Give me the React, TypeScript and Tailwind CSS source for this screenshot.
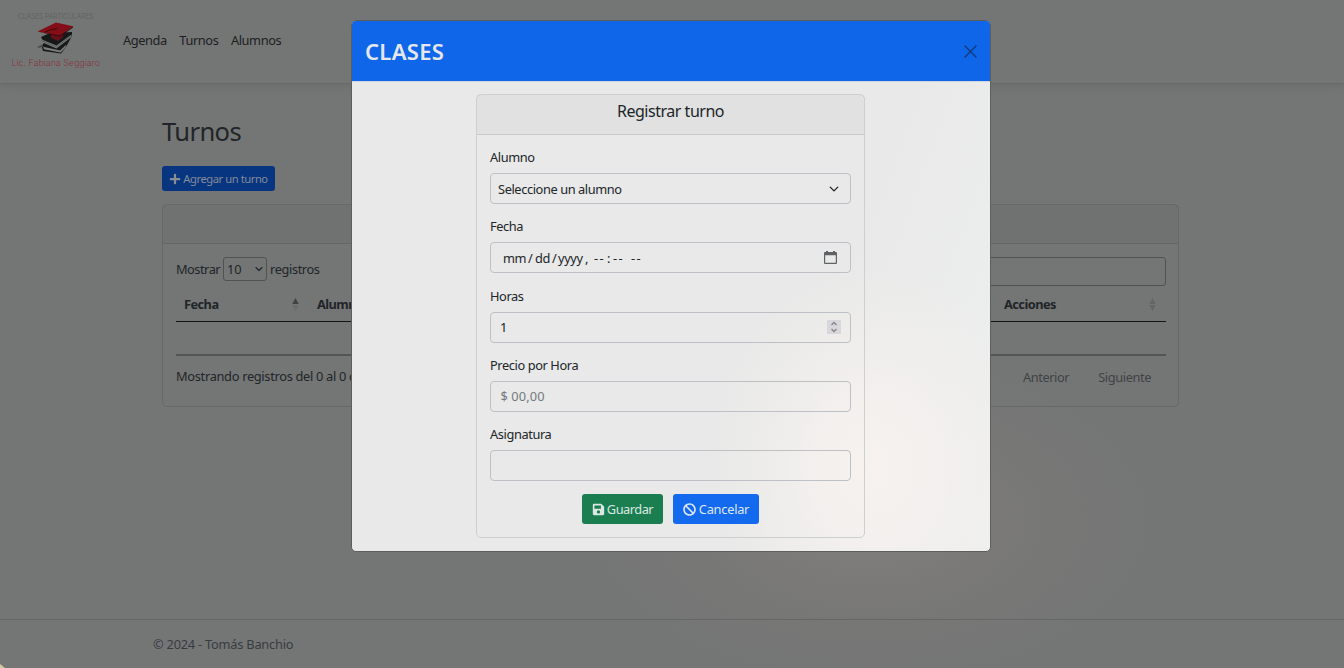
import React from "react";
import { FaPlus, FaSave, FaBan } from "react-icons/fa";

function Logo() {
  return (
    <svg className="block overflow-visible tracking-normal" width="110" height="64" viewBox="0 0 110 64">
      <text x="12" y="9" fontSize="7" fill="#5c5f5f" textLength="75.5" className="font-['Inter',sans-serif] font-light">CLASES PARTICULARES</text>
      <path d="M35 27 L44 23 L66 22 L66 26 L60 37 L55 43.5 L37 41 L35.5 36 L38 33 Z" fill="#171919" />
      <path d="M34.5 29 L50.5 35.5 L65.5 24.5 L65.5 27 L50.5 38.5 L35 31.8 Z" fill="#7a7d7d" />
      <path d="M35.5 30.6 L50.5 37 L64.5 26.5" stroke="#3a3c3c" strokeWidth="0.5" fill="none" />
      <path d="M37 36.8 L54 40.6 L60.5 34.5 L59.5 37.5 L54.5 42.6 L38 39.2 Z" fill="#7c7f7f" />
      <path d="M31 37 L36 34.5 L37.5 36.5 L33 38 L38 40.5 Z" fill="#4b4e4e" />
      <path d="M45 23 L45 27.5 L52 31 L57 27 L57 22 Z" fill="#68101a" />
      <path d="M31.5 21.5 L50 12.5 L67 16.3 L54 25.5 Z" fill="#830e17" />
      <path d="M31.5 21.5 L54 25.5 L67 16.3 L67 17.4 L54 26.7 Z" fill="#3d080d" />
      <path d="M51 18.5 L43 20.3 L38.5 22.5" stroke="#2b0709" strokeWidth="0.8" fill="none" />
      <text x="5.5" y="56" fontSize="9" fill="#843a42" textLength="88.5" className="font-['Inter',sans-serif] font-light">Lic. Fabiana Seggiaro</text>
    </svg>
  );
}

function SortArrows({ active = false }: { active?: boolean }) {
  return (
    <svg className="block" width="7" height="13" viewBox="0 0 7 13">
      <path d="M3.5 0 L6.7 6 H0.3 Z" fill={active ? "#3f4242" : "#656767"} />
      <path d="M3.5 13 L6.7 7 H0.3 Z" fill={active ? "#6a6c6c" : "#656767"} />
    </svg>
  );
}

function Chevron({ className }: { className: string }) {
  return (
    <svg className={className} viewBox="0 0 16 16" fill="none" stroke="currentColor" strokeWidth="2.2" strokeLinecap="round" strokeLinejoin="round">
      <path d="m2 5 6 6 6-6" />
    </svg>
  );
}

function Field({ label, className = "px-[10px]", children }: { label: string; className?: string; children?: React.ReactNode }) {
  return (
    <div className="h-[69.25px]">
      <div className="mb-[6px] h-[19px] leading-[19px]">{label}</div>
      <div className={"flex h-[31px] items-center rounded-[4px] border border-[#bdc1c6] " + className}>{children}</div>
    </div>
  );
}

function Page() {
  return (
    <div className="flex h-full flex-col">
      <header className="flex h-[84px] shrink-0 items-start border-b border-[#686a6a] pl-[6px] pt-[10px] text-[#1c2023] shadow-[0_3px_8px_rgba(0,0,0,0.07)]">
        <Logo />
        <nav className="ml-[7px] mt-[21px] flex gap-[12.5px] leading-[19px]">
          <a>Agenda</a>
          <a>Turnos</a>
          <a>Alumnos</a>
        </nav>
      </header>
      <main className="ml-[162px] w-[1017px] flex-1">
        <h1 className="mt-[32px] text-[25.6px] leading-[31px] tracking-[-0.65px]">Turnos</h1>
        <button className="mt-[19px] flex h-[25px] w-[113px] items-center justify-center rounded-[3px] bg-[#07357f] text-[11.2px] text-[#838b9b]">
          <FaPlus className="mr-[2px] size-[12px] text-[#8a8d93]" />
          <span className="tracking-[-0.44px]">Agregar un turno</span>
        </button>
        <section className="mt-[13px] h-[203px] rounded-[5px] border border-[#666969]">
          <div className="h-[39px] border-b border-[#646767] bg-black/[0.03]" />
          <div className="pl-[13px] pr-[12px] pt-[13px]">
            <div className="flex h-[29px] items-start justify-between">
              <div className="flex items-center">
                <span className="tracking-[-0.5px]">Mostrar</span>
                <div className="mx-[3px] flex h-[24px] w-[44px] items-center justify-between rounded-[3px] border border-[#505353] pl-[3px] pr-[3px] tracking-[-0.1px]">
                  <span>10</span>
                  <Chevron className="size-[8px]" />
                </div>
                <span>registros</span>
              </div>
              <div className="h-[29px] w-[240px] rounded-[3px] border border-[#505353]" />
            </div>
            <div className="flex h-[36px] items-center border-b border-[#121415] pt-[1px] font-bold tracking-[-0.55px]">
              <div className="flex w-[133px] items-center justify-between pl-[8px] pr-[10px]">
                <span>Fecha</span>
                <SortArrows active />
              </div>
              <div className="flex-1 pl-[8px]">Alumno</div>
              <div className="flex w-[170px] items-center justify-between pl-[8px] pr-[10px]">
                <span>Acciones</span>
                <SortArrows />
              </div>
            </div>
            <div className="h-[34px] border-b-2 border-[#525555]" />
            <div className="flex items-center justify-between pt-[10px]">
              <span className="tracking-[-0.3px]">Mostrando registros del 0 al 0 de un total de 0 registros</span>
              <div className="flex gap-[29px] pr-[15px] pt-[2px] text-[#3f4345]">
                <span>Anterior</span>
                <span>Siguiente</span>
              </div>
            </div>
          </div>
        </section>
      </main>
      <footer className="h-[49px] shrink-0 border-t border-[#656767] pl-[153px] pt-[15px] tracking-[-0.22px] text-[#373c40]">© 2024 - Tomás Banchio</footer>
    </div>
  );
}

function Modal() {
  return (
    <div className="absolute left-[351px] top-[20px] h-[532px] w-[640px] overflow-hidden rounded-[5px] border border-[#5d5f5f] bg-[#e8e9e8] bg-[radial-gradient(ellipse_160px_200px_at_520px_445px,rgba(247,242,238,1)_0%,rgba(245,241,239,0.75)_40%,rgba(237,235,235,0)_100%),linear-gradient(110deg,transparent_70%,#eeefef_100%)]">
      <div className="flex h-[61px] items-center justify-between border-b border-[#cfd5dd] bg-[#0f66e9] pl-[13px] pr-[13px]">
        <h2 className="pt-[1px] text-[22px] font-semibold tracking-[0.3px] text-[#e4e7ec]">CLASES</h2>
        <svg className="block text-[#10397c]" width="13" height="13" viewBox="0 0 13 13" fill="none" stroke="currentColor" strokeWidth="1.4" strokeLinecap="round">
          <path d="M1 1 12 12M12 1 1 12" />
        </svg>
      </div>
      <div className="ml-[124px] mt-[12px] h-[444px] w-[389px] rounded-[5px] border border-[#ccd0d0]">
        <div className="h-[40px] border-b border-[#c8caca] bg-black/[0.03] pt-[4px] text-center text-[16px] leading-[24px] tracking-[-0.48px]">Registrar turno</div>
        <div className="px-[13px] pt-[13px]">
          <Field label="Alumno" className="justify-between pl-[7px] pr-[11px]">
            <span className="pt-[2px]">Seleccione un alumno</span>
            <Chevron className="size-[10px]" />
          </Field>
          <Field label="Fecha" className="pl-[12px] pr-[13px]">
            <div className="flex flex-1 whitespace-pre pt-[2px]">
              <span className="w-[25px]">mm</span>
              <span className="w-[7px]">/</span>
              <span className="w-[17px]">dd</span>
              <span className="w-[6px]">/</span>
              <span className="w-[27px]">yyyy</span>
              <span className="w-[9px]">,</span>
              <span className="w-[13px] tracking-[1.3px]">--</span>
              <span className="w-[6px]">:</span>
              <span className="w-[18px] tracking-[1.3px]">--</span>
              <span className="tracking-[1.3px]">--</span>
            </div>
            <svg className="block text-[#606365]" width="13" height="13" viewBox="0 0 13 13">
              <path fill="currentColor" fillRule="evenodd" d="M2 0h2v1h5V0h2v1h1a1 1 0 0 1 1 1v10a1 1 0 0 1-1 1H1a1 1 0 0 1-1-1V2a1 1 0 0 1 1-1h1ZM1.2 4.2v7.6h10.6V4.2Z" />
            </svg>
          </Field>
          <Field label="Horas" className="justify-between pl-[9px] pr-[9px]">
            <span>1</span>
            <svg className="block" width="14" height="14" viewBox="0 0 14 14">
              <path d="M0 0h14v14H0Z" fill="#d7d7dc" />
              <path d="m4.5 5 2.5-2.5L9.5 5M4.5 9 7 11.5 9.5 9" stroke="#85858a" strokeWidth="1.3" fill="none" />
            </svg>
          </Field>
          <Field label="Precio por Hora" className="px-[9.5px]">
            <span className="tracking-[0.1px] text-[#747a80]">$ 00,00</span>
          </Field>
          <Field label="Asignatura" />
          <div className="flex justify-center gap-[10px]">
            <button className="flex h-[30px] w-[81px] items-center justify-center rounded-[3px] bg-[#1a7e50] text-[#dce9e2]">
              <FaSave className="mr-[2px] size-[13px]" />
              <span className="tracking-[-0.5px]">Guardar</span>
            </button>
            <button className="flex h-[30px] w-[86px] items-center justify-center rounded-[3px] bg-[#146aee] text-[#dfe7f4]">
              <FaBan className="mr-[3px] size-[13px]" />
              <span className="tracking-[-0.25px]">Cancelar</span>
            </button>
          </div>
        </div>
      </div>
    </div>
  );
}

export default function App() {
  return (
    <div className="relative h-[668px] w-[1344px] overflow-hidden bg-[#747675] bg-[radial-gradient(ellipse_280px_160px_at_870px_520px,#807e79_0%,#7c7b79_30%,#777776_65%,transparent_100%)] font-['Noto_Sans',sans-serif] text-[12.8px] leading-[19px] tracking-[-0.4px] text-[#212529]">
      <Page />
      <Modal />
      <svg className="absolute bottom-0 left-0" width="5" height="4" viewBox="0 0 5 4">
        <path d="M0 0 5 4H0Z" fill="#d5c79c" />
      </svg>
    </div>
  );
}
